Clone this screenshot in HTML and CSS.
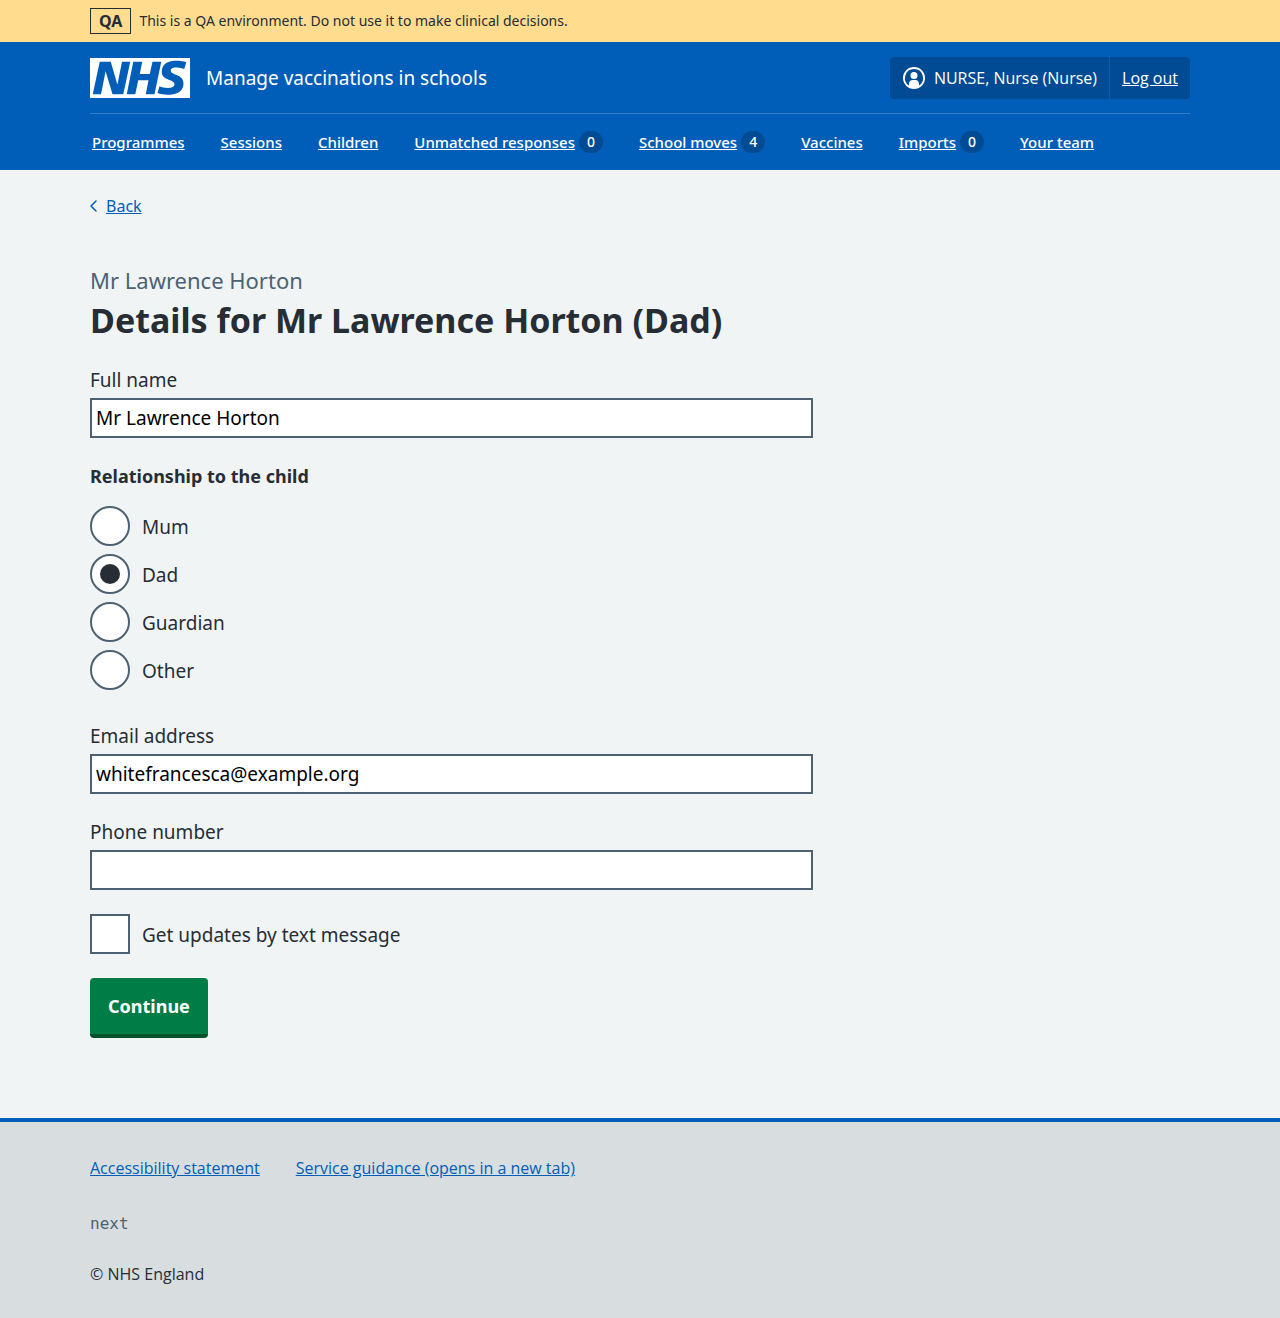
FILE: index.html
```html
<!DOCTYPE html>
<html lang="en">
<head>
<meta charset="utf-8">
<meta name="viewport" content="width=device-width, initial-scale=1">
<title>Details for Mr Lawrence Horton (Dad) – Manage vaccinations in schools</title>
<link rel="stylesheet" href="styles.css">
</head>
<body>
<div class="environment">
  <div class="container environment-inner">
    <strong class="environment-tag">QA</strong>
    <span>This is a QA environment. Do not use it to make clinical decisions.</span>
  </div>
</div>

<header class="header">
  <div class="container">
    <div class="header-main">
      <a class="service" href="#">
        <svg class="logo" viewBox="0 0 200 80" role="img" aria-label="NHS">
          <path fill="#fff" d="M200 0v80H0V0h200Zm-27.5 5.5c-14.5 0-29 5-29 22 0 10.2 7.7 13.5 14.7 16.3l.7.3c5.4 2 10.1 3.9 10.1 8.4 0 6.5-8.5 7.5-14 7.5s-12.5-1.5-16-3.5L135 70c5.5 2 13.5 3.5 20 3.5 15.5 0 32-4.5 32-22.5 0-19.5-25.5-16.5-25.5-25.5 0-5.5 5.5-6.5 12.5-6.5a35 35 0 0 1 14.5 3l4-13.5c-4.5-2-12-3-20-3Zm-131 2h-22l-14 65H22l9-45h.5l13.5 45h21.5l14-65H64l-9 45h-.5l-13-45Zm63 0h-18l-13 65h17l6-28H117l-5.5 28H129l13.5-65H125L119.5 32h-20l5-24.5Z"/>
        </svg>
        <span class="service-name">Manage vaccinations in schools</span>
      </a>
      <ul class="account">
        <li class="account-item">
          <svg class="account-icon" viewBox="0 0 24 24" aria-hidden="true">
            <path fill="#fff" d="M12 1a11 11 0 1 1 0 22 11 11 0 0 1 0-22Zm0 2a9 9 0 0 0-5 16.5V18a4 4 0 0 1 4-4h2a4 4 0 0 1 4 4v1.5A9 9 0 0 0 12 3Zm0 3a3.5 3.5 0 1 1-3.5 3.5A3.4 3.4 0 0 1 12 6Z"/>
          </svg>
          <span>NURSE, Nurse (Nurse)</span>
        </li>
        <li class="account-item"><a class="header-link" href="#">Log out</a></li>
      </ul>
    </div>
    <nav class="nav" aria-label="Menu">
      <ul class="nav-list">
        <li class="nav-item"><a class="header-link" href="#">Programmes</a></li>
        <li class="nav-item"><a class="header-link" href="#">Sessions</a></li>
        <li class="nav-item"><a class="header-link" href="#">Children</a></li>
        <li class="nav-item"><a class="header-link" href="#">Unmatched responses</a><span class="count">0</span></li>
        <li class="nav-item"><a class="header-link" href="#">School moves</a><span class="count">4</span></li>
        <li class="nav-item"><a class="header-link" href="#">Vaccines</a></li>
        <li class="nav-item"><a class="header-link" href="#">Imports</a><span class="count">0</span></li>
        <li class="nav-item"><a class="header-link" href="#">Your team</a></li>
      </ul>
    </nav>
  </div>
</header>

<div class="container page">
  <div class="back">
    <svg class="back-icon" viewBox="0 0 8 14" aria-hidden="true"><path d="M6 2 1 7l5 5" fill="none" stroke="#005eb8" stroke-width="1.5" stroke-linecap="round" stroke-linejoin="round"/></svg>
    <a href="#">Back</a>
  </div>
  <main class="main">
    <form class="form">
      <h1 class="heading"><span class="caption">Mr Lawrence Horton</span>Details for Mr Lawrence Horton (Dad)</h1>

      <div class="field">
        <label class="label" for="full-name">Full name</label>
        <input class="input" id="full-name" type="text" value="Mr Lawrence Horton">
      </div>

      <fieldset class="fieldset">
        <legend class="legend">Relationship to the child</legend>
        <div class="options">
          <div class="option"><input class="radio" type="radio" name="relationship" id="mum"><label for="mum">Mum</label></div>
          <div class="option"><input class="radio" type="radio" name="relationship" id="dad" checked><label for="dad">Dad</label></div>
          <div class="option"><input class="radio" type="radio" name="relationship" id="guardian"><label for="guardian">Guardian</label></div>
          <div class="option"><input class="radio" type="radio" name="relationship" id="other"><label for="other">Other</label></div>
        </div>
      </fieldset>

      <div class="field">
        <label class="label" for="email">Email address</label>
        <input class="input" id="email" type="email" value="whitefrancesca@example.org">
      </div>

      <div class="field">
        <label class="label" for="phone">Phone number</label>
        <input class="input" id="phone" type="tel">
      </div>

      <div class="option updates"><input class="checkbox" type="checkbox" id="updates"><label for="updates">Get updates by text message</label></div>

      <button class="button" type="submit">Continue</button>
    </form>
  </main>
</div>

<footer class="footer">
  <div class="container">
    <ul class="footer-list">
      <li><a href="#">Accessibility statement</a></li>
      <li><a href="#">Service guidance (opens in a new tab)</a></li>
    </ul>
    <p class="version">next</p>
    <p class="copyright">© NHS England</p>
  </div>
</footer>
</body>
</html>
```
FILE: styles.css
```css
* { box-sizing: border-box; }

body {
  margin: 0;
  display: flex;
  flex-direction: column;
  min-height: 100vh;
  background: #f0f4f5;
  color: #262d35;
  font-family: "Noto Sans", "Open Sans", sans-serif;
  font-size: 19px;
  line-height: 28px;
}

ul { margin: 0; padding: 0; list-style: none; }
p { margin: 0; }
a { color: #005eb8; }

.container {
  width: 100%;
  max-width: 1164px;
  margin: 0 auto;
  padding: 0 32px;
}

/* Environment banner */
.environment { background: #ffdc8e; font-size: 14px; line-height: 24px; }
.environment-inner { display: flex; align-items: center; gap: 8px; padding-top: 8px; padding-bottom: 8px; }
.environment-tag { border: 1px solid #262d35; padding: 0 8px; font-size: 16px; font-weight: 700; }

/* Header */
.header { background: #005eb8; color: #fff; font-size: 16px; line-height: 24px; }
.header-main { display: flex; justify-content: space-between; align-items: center; padding: 15px 0 14px; }
.service { display: flex; align-items: center; gap: 16px; color: #fff; text-decoration: none; }
.logo { width: 100px; height: 40px; }
.service-name { font-size: 19px; }
.header-link { color: #fff; }
.account { display: flex; background: #004b93; border-radius: 4px; font-family: "Open Sans", sans-serif; }
.account-item { display: flex; align-items: center; gap: 8px; padding: 9px 12px; }
.account-item + .account-item { border-left: 1px solid #005eb8; }
.account-icon { width: 24px; height: 24px; }
.nav { border-top: 1px solid #337ec6; font-size: 15px; font-weight: 500; }
.nav-list { display: flex; flex-wrap: wrap; gap: 0 36px; padding: 16px 2px; }
.nav-item { display: flex; align-items: center; gap: 4px; }
.count { min-width: 24px; border-radius: 12px; background: #004b93; font-size: 14px; line-height: 22px; text-align: center; }

/* Page */
.back { display: flex; align-items: center; gap: 8px; padding-top: 24px; font-size: 16px; line-height: 24px; }
.back-icon { width: 8px; height: 14px; }
.main { padding: 48px 0 80px; }
.form { width: calc((100% + 32px) * 2 / 3 - 32px); }
.heading { margin: 0 0 24px; font-size: 34px; line-height: 44px; font-weight: 700; }
.caption { display: block; margin-bottom: 4px; color: #4c6272; font-size: 22px; line-height: 28px; font-weight: 400; }
.field { margin-bottom: 24px; }
.label { display: block; margin-bottom: 4px; }
.input {
  display: block;
  width: 100%;
  height: 40px;
  padding: 4px;
  border: 2px solid #4c6272;
  border-radius: 0;
  background: #fff;
  color: #000;
  font: inherit;
}
.fieldset { margin: 0 0 32px; padding: 0; border: 0; }
.legend { margin-bottom: 16px; padding: 0; font-size: 18px; font-weight: 700; }
.options { display: flex; flex-direction: column; gap: 8px; }
.option { display: flex; align-items: center; gap: 12px; }
.option label { padding-top: 2px; }
.radio, .checkbox {
  appearance: none;
  width: 40px;
  height: 40px;
  margin: 0;
  border: 2px solid #4c6272;
  background: #fff;
}
.radio { border-radius: 50%; display: grid; place-items: center; }
.radio:checked::before { content: ""; width: 20px; height: 20px; border-radius: 50%; background: #262d35; }
.updates { margin-bottom: 24px; }
.button {
  display: block;
  padding: 14px 18px;
  border: 0;
  border-radius: 4px;
  border-bottom: 4px solid #00522a;
  background: #007d47;
  color: #fff;
  font: inherit;
  font-size: 18px;
  font-weight: 700;
}

/* Footer */
.footer { flex: 1; border-top: 4px solid #005eb8; background: #d8dde0; font-family: "Open Sans", sans-serif; font-size: 16px; line-height: 24px; padding: 34px 0 32px; }
.footer-list { display: flex; flex-wrap: wrap; gap: 8px 36px; }
.version { margin: 32px 0 26px; color: #4c6272; font-family: "DejaVu Sans Mono", monospace; }
```
